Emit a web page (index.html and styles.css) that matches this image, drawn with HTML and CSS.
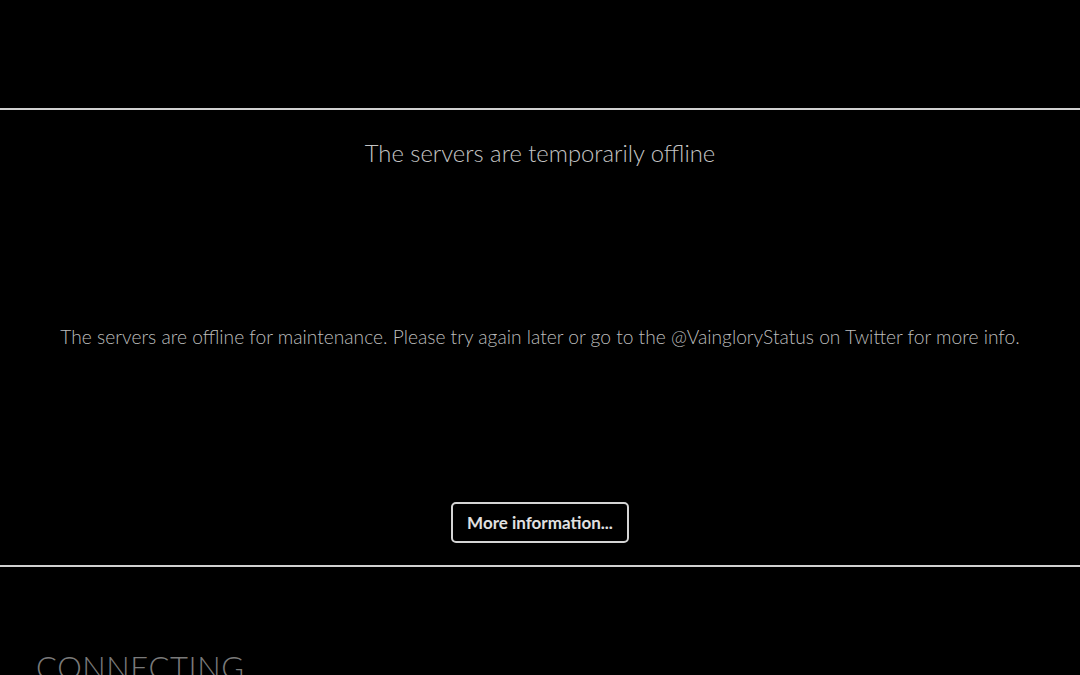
FILE: index.html
```html
<!DOCTYPE html>
<html lang="en">
  <head>
    <meta charset="UTF-8" />
    <meta name="viewport" content="width=device-width, initial-scale=1.0" />
    <title>Servers Offline</title>
    <link rel="stylesheet" href="styles.css">
  </head>
  <body>
    <div class="top-space"></div>
    <div class="notice">
      <h1 class="notice-title">The servers are temporarily offline</h1>
      <p class="notice-text">
        The servers are offline for maintenance. Please try again later or go to the @VaingloryStatus on Twitter for more info.
      </p>
      <button class="more-button">More information...</button>
    </div>
    <div class="status">
      <span class="status-label">CONNECTING</span>
    </div>
  </body>
</html>
```

FILE: styles.css
```css
* {
  margin: 0;
  padding: 0;
  box-sizing: border-box;
}

body {
  font-family: Lato, "Open Sans", sans-serif;
  background-color: #000;
  color: #c8c8c8;
  height: 100vh;
  overflow: hidden;
}

.top-space {
  height: 108px;
}

.notice {
  border-top: 2px solid #d0d0d0;
  border-bottom: 2px solid #d0d0d0;
  height: 459px;
  display: flex;
  flex-direction: column;
  align-items: center;
}

.notice-title {
  font-size: 23.8px;
  font-weight: 300;
  line-height: 30px;
  margin-top: 28px;
  color: #c4c4c4;
}

.notice-text {
  font-size: 19.2px;
  font-weight: 300;
  line-height: 24px;
  margin-top: 157px;
  color: #bdbdbd;
}

.more-button {
  margin-top: 153px;
  width: 178px;
  height: 41px;
  background: transparent;
  border: 2px solid #d4d4d4;
  border-radius: 5px;
  color: #e0e0e0;
  font-family: Lato, sans-serif;
  font-size: 17px;
  font-weight: 700;
}

.status {
  padding: 82px 0 0 36px;
}

.status-label {
  font-size: 31px;
  font-weight: 300;
  letter-spacing: 0.6px;
  color: #7a7a7a;
  line-height: 36px;
}
```
